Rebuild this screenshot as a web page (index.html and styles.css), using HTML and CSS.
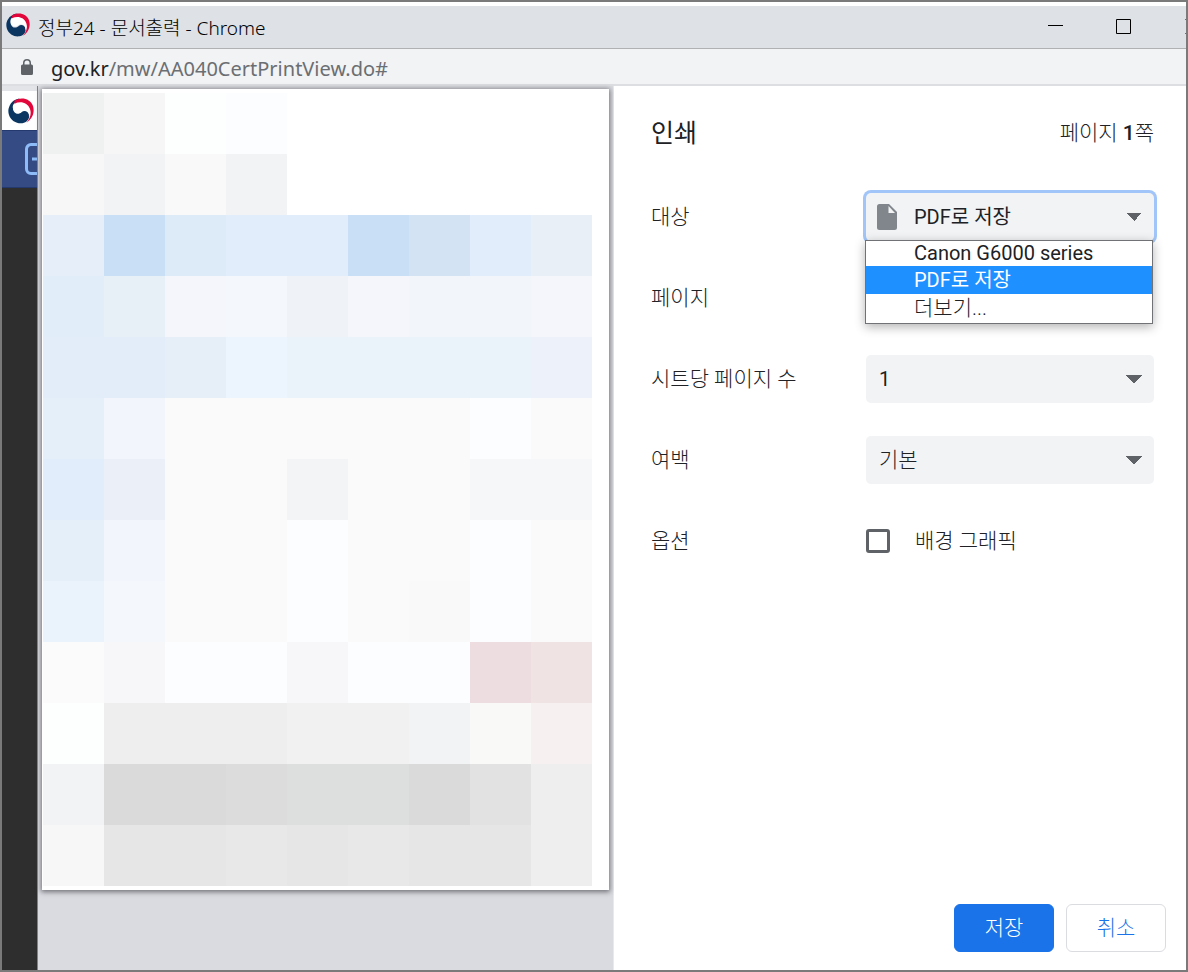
FILE: index.html
```html
<!DOCTYPE html>
<html lang="ko">
<head>
<meta charset="utf-8">
<title>정부24 - 문서출력</title>
<link rel="stylesheet" href="styles.css">
</head>
<body>
<svg width="0" height="0" class="defs" aria-hidden="true">
  <symbol id="taegeuk" viewBox="0 0 26 26">
    <path fill="#0b3661" d="M8 1.5A12.6 12.6 0 0 0 1 17c2 6 8 9 13.500 8.200C19.500 24.500 22 20 21 16.500c-1-3.500-5-4.500-7.500-2.200-2 1.900-5 2-6.800.2C4.500 12.300 4.600 9 6.500 6.800 8.500 4.300 12 3.500 15 4.200 11.500 3.800 8 2.600 12 .3Z"/>
    <path fill="#fff" d="M12 2.800C7.500 3 4.600 6 4.800 9.800c.3 4 4.200 6.200 7.400 4.200 1.300-.9 2-1.700 4-1.700 3.300.2 5.300 2.700 4.700 6.200 4.600-4.700 3.300-12.500-2.200-15.500C16.500 1.700 14 1.800 12 2.800Z"/>
    <path fill="#e2063a" d="M6.500 2.600C13.500-1.600 22.500.8 25 8c2 6.500-.8 13-6.500 16.700C22.300 20 23.600 15.500 22 11 19.800 5 13 2.600 6.500 5.700Z"/>
  </symbol>
</svg>
<div class="window">
  <header class="titlebar">
    <svg class="favicon"><use href="#taegeuk"/></svg>
    <span class="window-title">정부24 - 문서출력 - Chrome</span>
    <button class="window-button" aria-label="최소화"><svg width="16" height="16"><path d="M0 6.500h15" stroke="#000"/></svg></button>
    <button class="window-button" aria-label="최대화"><svg width="16" height="16"><path d="M.5.5h14v14H.5z" fill="none" stroke="#000"/></svg></button>
    <button class="window-button close" aria-label="닫기"><svg width="16" height="16"><path d="M.5.5l14 14M14.500.5l-14 14" stroke="#000"/></svg></button>
  </header>
  <div class="addressbar">
    <svg class="lock" viewBox="0 0 12 16"><path fill="#5f6368" fill-rule="evenodd" d="M1.500 5.500H2V4a4 4 0 0 1 8 0v1.500h.5A1.500 1.500 0 0 1 12 7v7.500a1.500 1.500 0 0 1-1.500 1.500h-9A1.500 1.500 0 0 1 0 14.500V7a1.500 1.500 0 0 1 1.500-1.500ZM3.500 5.500h5V4a2.500 2.500 0 0 0-5 0Z"/></svg>
    <span class="url"><span class="host">gov.kr</span>/mw/AA040CertPrintView.do#</span>
  </div>
  <div class="content">
    <aside class="page-strip">
      <div class="strip-logo"><svg><use href="#taegeuk"/></svg></div>
      <div class="strip-tool"><svg viewBox="0 0 14 32"><path d="M14 1.500H6A4.500 4.500 0 0 0 1.500 6v20A4.500 4.500 0 0 0 6 30.500h8M7 16h7" fill="none" stroke="#8ebcf8" stroke-width="3"/></svg></div>
    </aside>
    <section class="preview" aria-label="미리보기">
      <div class="paper">
        <svg class="mosaic" viewBox="0 0 9 13" shape-rendering="crispEdges">
          <path fill="#eff1f0" d="M0 0h1v1H0z"/><path fill="#f6f6f6" d="M1 0h1v1H1z"/><path fill="#fdfefe" d="M2 0h1v1H2z"/><path fill="#fbfdfe" d="M3 0h1v1H3z"/>
          <path fill="#f7f7f7" d="M0 1h1v1H0z"/><path fill="#f9f9f9" d="M2 1h1v1H2z"/><path fill="#f1f3f4" d="M1 1h1v1H1zM3 1h1v1H3z"/>
          <path fill="#e6eff9" d="M0 2h1v1H0z"/><path fill="#c9dff6" d="M1 2h1v1H1zM5 2h1v1H5z"/><path fill="#ddebf8" d="M2 2h1v1H2z"/><path fill="#e1edfa" d="M3 2h2v1H3zM7 2h1v1H7z"/><path fill="#d4e3f3" d="M6 2h1v1H6z"/><path fill="#e8eff7" d="M8 2h1v1H8z"/>
          <path fill="#e2edfa" d="M0 3h1v1H0z"/><path fill="#e7eff7" d="M1 3h1v1H1z"/><path fill="#f4f6fb" d="M2 3h1v1H2zM5 3h1v1H5zM8 3h1v1H8z"/><path fill="#f4f8fd" d="M3 3h1v1H3z"/><path fill="#eff3f8" d="M4 3h1v1H4z"/><path fill="#f2f6fb" d="M6 3h2v1H6z"/>
          <path fill="#e2edf9" d="M0 4h2v1H0z"/><path fill="#e6eef8" d="M2 4h1v1H2z"/><path fill="#ecf4fd" d="M3 4h1v1H3z"/><path fill="#eaf2fa" d="M4 4h4v1H4z"/><path fill="#edf1fa" d="M8 4h1v1H8z"/>
          <path fill="#e4effa" d="M0 5h1v1H0zM0 7h1v1H0z"/><path fill="#f2f6fc" d="M1 5h1v1H1zM1 7h1v1H1z"/><path fill="#fafafa" d="M2 5h5v1H2zM8 5h1v1H8zM2 6h2v2H2zM5 6h2v2H5zM8 7h1v2H8zM2 8h2v1H2zM5 8h1v1H5z"/><path fill="#fbfdff" d="M7 5h1v1H7zM4 7h1v2H4zM7 7h1v2H7z"/>
          <path fill="#e2edfb" d="M0 6h1v1H0z"/><path fill="#ebeff8" d="M1 6h1v1H1z"/><path fill="#f3f4f6" d="M4 6h1v1H4z"/><path fill="#f6f7f9" d="M7 6h2v1H7z"/><path fill="#f9f9fa" d="M6 8h1v1H6z"/>
          <path fill="#eaf3fc" d="M0 8h1v1H0z"/><path fill="#f4f8fd" d="M1 8h1v1H1z"/>
          <path fill="#fbfbfb" d="M0 9h1v1H0z"/><path fill="#f7f7f9" d="M1 9h1v1H1zM4 9h1v1H4z"/><path fill="#fbfdff" d="M2 9h2v1H2zM5 9h2v1H5z"/><path fill="#eddde0" d="M7 9h1v1H7z"/><path fill="#efe3e4" d="M8 9h1v1H8z"/>
          <path fill="#fdfefe" d="M0 10h1v1H0z"/><path fill="#eeeeee" d="M1 10h3v1H1z"/><path fill="#f1f1f1" d="M4 10h2v1H4z"/><path fill="#f2f3f4" d="M6 10h1v1H6z"/><path fill="#f9f9f8" d="M7 10h1v1H7z"/><path fill="#f7f0f0" d="M8 10h1v1H8z"/>
          <path fill="#f2f3f4" d="M0 11h1v1H0z"/><path fill="#dadada" d="M1 11h2v1H1zM6 11h1v1H6z"/><path fill="#dcdcdc" d="M3 11h1v1H3z"/><path fill="#dddfde" d="M4 11h2v1H4z"/><path fill="#e2e2e2" d="M7 11h1v1H7z"/><path fill="#eeeeee" d="M8 11h1v2H8z"/>
          <path fill="#f7f7f7" d="M0 12h1v1H0z"/><path fill="#e6e6e6" d="M1 12h2v1H1zM4 12h1v1H4zM6 12h2v1H6z"/><path fill="#e8e8e8" d="M3 12h1v1H3zM5 12h1v1H5z"/>
        </svg>
      </div>
    </section>
    <form class="dialog">
      <div class="dialog-head"><h1>인쇄</h1><p>페이지 <b>1</b>쪽</p></div>
      <div class="settings">
        <div class="row">
          <label for="destination">대상</label>
          <div class="field destination">
            <svg class="file" viewBox="0 0 20 26"><path fill="#80868b" d="M2.500 0H12l8 8v15.500a2.500 2.500 0 0 1-2.500 2.500h-15A2.500 2.500 0 0 1 0 23.500v-21A2.500 2.500 0 0 1 2.500 0Z"/><path fill="#f1f3f4" d="M11.500 2v7H18Z"/></svg>
            <select id="destination"><option>PDF로 저장</option></select>
            <ul class="popup" role="listbox" aria-label="대상">
              <li role="option">Canon G6000 series</li>
              <li role="option" aria-selected="true">PDF로 저장</li>
              <li role="option" class="more">더보기...</li>
            </ul>
          </div>
        </div>
        <div class="row"><span class="label">페이지</span></div>
        <div class="row">
          <label for="per-sheet">시트당 페이지 수</label>
          <div class="field"><select id="per-sheet" class="numeric"><option>1</option></select></div>
        </div>
        <div class="row">
          <label for="margins">여백</label>
          <div class="field"><select id="margins"><option>기본</option></select></div>
        </div>
        <div class="row">
          <span class="label">옵션</span>
          <label class="check"><input type="checkbox"><span class="label">배경 그래픽</span></label>
        </div>
      </div>
      <div class="actions">
        <button type="button" class="button primary">저장</button>
        <button type="button" class="button">취소</button>
      </div>
    </form>
  </div>
</div>
</body>
</html>
```
FILE: styles.css
```css
* { box-sizing: border-box; }
body { margin: 0; font-family: Roboto, "Noto Sans CJK KR", sans-serif; font-size: 20px; color: #202124; }
h1, p, ul { margin: 0; padding: 0; }
.defs { position: absolute; }
svg { display: block; flex: none; }

.window {
  display: flex; flex-direction: column; min-height: 100vh;
  border: 2px solid #7a7a7a; background: #fff; overflow: hidden;
}
.titlebar {
  display: flex; align-items: center; height: 43px; margin-top: 4px; padding-left: 4px;
  background: #dee1e6; border-bottom: 1px solid #b0b1b3; overflow: hidden;
  font-family: "Noto Sans", "Noto Sans CJK KR", sans-serif; font-weight: 300; font-size: 19px; color: #000;
}
.favicon { width: 24px; height: 24px; margin-right: 8px; margin-bottom: 4px; }
.window-title { flex: 1; white-space: nowrap; }
.window-button { flex: none; width: 68px; height: 42px; padding: 0 0 0 26px; border: 0; background: none; }
.window-button.close { width: 28px; padding-left: 27px; overflow: hidden; }
.addressbar {
  display: flex; align-items: center; gap: 18px; height: 37px; padding-left: 19px;
  background: #f1f3f4; border-bottom: 2px solid #dcdee1;
  font-family: "Noto Sans", "Noto Sans CJK KR", sans-serif; color: #6b6e72;
}
.lock { width: 12px; height: 16px; }
.url { padding-top: 4px; }
.host { color: #202124; }

.content { flex: 1; display: grid; grid-template-columns: 36px 576fr 572fr; }
.page-strip { background: #2e2e2e; border-right: 1px solid #808186; overflow: hidden; }
.strip-logo { height: 44px; padding: 7px 0 0 6px; background: #fff; border-top: 5px solid #e3e4e7; }
.strip-logo svg { width: 26px; height: 26px; }
.strip-tool { height: 58px; padding: 12px 0 0 23px; background: #354b84; border-top: 1px solid #24396e; border-bottom: 1px solid #24396e; }
.strip-tool svg { width: 14px; height: 32px; }

.preview { padding: 3px 4px 80px; background: #dadbe0; border-right: 1px solid #e8e9ee; }
.paper { padding: 4px 17px 4px 1px; background: #fff; box-shadow: 0 1px 5px 1px #707178; }
.mosaic { width: 100%; }

.dialog { display: flex; flex-direction: column; padding: 25px 20px 18px 37px; background: #fff; font-weight: 300; }
.dialog-head { display: flex; justify-content: space-between; align-items: center; height: 40px; padding-right: 12px; }
.dialog-head h1 { font-size: 25px; font-weight: 400; }
.dialog-head b { font-weight: 500; }
.settings { display: flex; flex-direction: column; gap: 33px; margin-top: 42px; padding-right: 12px; }
.row { display: grid; grid-template-columns: 215fr 288fr; align-items: center; height: 48px; }
.field { position: relative; }
.row label, .label, .dialog-head p, .button { font-size: 21px; }
.label, .row > label[for] { padding-bottom: 4px; }
select {
  display: block; width: 100%; height: 48px; padding: 0 48px 0 13px; border: 0; border-radius: 5px;
  appearance: none; color: #202124; font: inherit; font-size: 21px;
  background: #f1f3f4 conic-gradient(from -45deg at 50% 100%, #5f6368 90deg, transparent 0) no-repeat right 12px center / 16px 8px;
}
.numeric { font-weight: 400; font-size: 20px; }
.destination select { padding-left: 48px; font-weight: 400; font-size: 20px; box-shadow: 0 0 0 3px #a1c5f8; }
.file { position: absolute; left: 11px; top: 11px; width: 20px; height: 26px; }
.popup {
  position: absolute; left: -1px; top: 47px; width: 100%; z-index: 1; list-style: none;
  background: #fff; border: 1px solid #707275; box-shadow: 0 3px 10px #0000004d; font-weight: 400;
}
.popup li { height: 28px; padding-left: 48px; line-height: 28px; white-space: nowrap; }
.popup li:first-child { height: 25px; line-height: 24px; }
.popup .more { height: 29px; font-size: 21px; font-weight: 300; }
.popup [aria-selected] { color: #fff; background: #1e90ff; }
.check { display: flex; align-items: center; gap: 25px; }
.check input { appearance: none; width: 24px; height: 24px; margin: 0; border: 3px solid #5f6368; border-radius: 3px; }
.actions { display: flex; justify-content: flex-end; gap: 12px; margin-top: auto; }
.button {
  width: 100px; height: 48px; padding: 0 0 4px; border: 1px solid #dadce0; border-radius: 6px;
  background: #fff; color: #1a73e8; font-family: inherit; font-weight: 300;
}
.button.primary { background: #1a73e8; border-color: #1a73e8; color: #fff; }
```
